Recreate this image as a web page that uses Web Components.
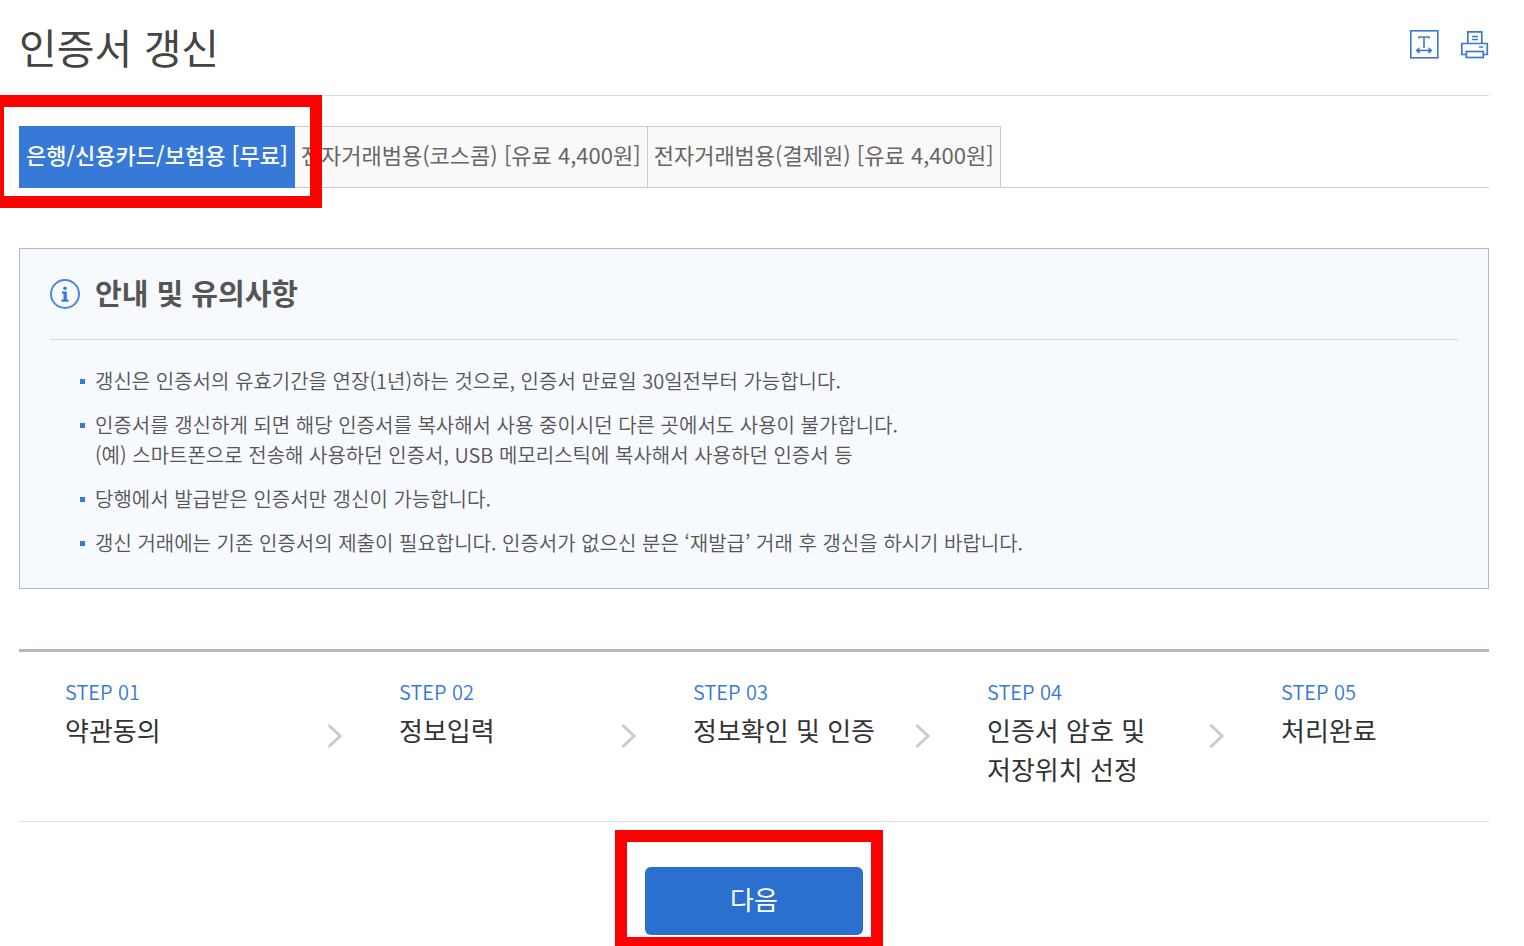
<!DOCTYPE html>
<html lang="ko">
<head>
<meta charset="utf-8">
<meta name="viewport" content="width=device-width, initial-scale=1">
<title>인증서 갱신</title>
<style>
  body {
    margin: 0;
    padding: 0 35px 0 19px;
    background: #fff;
    color: #444;
    font-family: "Noto Sans CJK KR", "Noto Sans", sans-serif;
    --blue: #2b70cf;
    --line: #ddd;
  }
</style>
</head>
<body>

<page-header>인증서 갱신</page-header>

<cert-tabs>
  <cert-tab active marked>은행/신용카드/보험용 [무료]</cert-tab>
  <cert-tab>전자거래범용(코스콤) [유료 4,400원]</cert-tab>
  <cert-tab>전자거래범용(결제원) [유료 4,400원]</cert-tab>
</cert-tabs>

<notice-box>
  <span slot="title">안내 및 유의사항</span>
  <notice-item>갱신은 인증서의 유효기간을 연장(1년)하는 것으로, 인증서 만료일 30일전부터 가능합니다.</notice-item>
  <notice-item>인증서를 갱신하게 되면 해당 인증서를 복사해서 사용 중이시던 다른 곳에서도 사용이 불가합니다.<br>(예) 스마트폰으로 전송해 사용하던 인증서, USB 메모리스틱에 복사해서 사용하던 인증서 등</notice-item>
  <notice-item>당행에서 발급받은 인증서만 갱신이 가능합니다.</notice-item>
  <notice-item>갱신 거래에는 기존 인증서의 제출이 필요합니다. 인증서가 없으신 분은 ‘재발급’ 거래 후 갱신을 하시기 바랍니다.</notice-item>
</notice-box>

<step-list>
  <step-item step="01" first>약관동의</step-item>
  <step-item step="02">정보입력</step-item>
  <step-item step="03">정보확인 및 인증</step-item>
  <step-item step="04">인증서 암호 및 저장위치 선정</step-item>
  <step-item step="05">처리완료</step-item>
</step-list>

<next-button>다음</next-button>

<script>
// 공통: shadow root에 마크업 넣기
class BaseElement extends HTMLElement {
  connectedCallback() {
    if (this.shadowRoot) return;
    this.attachShadow({ mode: 'open' });
    this.shadowRoot.innerHTML = this.render();
  }
}

/**
 * 제목 + 글자크기/인쇄 버튼
 */
class PageHeader extends BaseElement {
  render() {
    return `
      <style>
        :host {
          display: flex;
          justify-content: space-between;
          align-items: flex-start;
          padding: 16px 0 19px;
          border-bottom: 1px solid var(--line);
        }
        h1 {
          margin: 0;
          font-size: 41px;
          font-weight: 400;
          line-height: 60px;
        }
        .tools {
          display: flex;
          gap: 21px;
          padding-top: 14px;
        }
        button {
          display: block;
          padding: 0;
          border: 0;
          background: none;
          cursor: pointer;
        }
        svg {
          display: block;
          width: 29px;
          height: 29px;
          fill: none;
          stroke: #3a79cf;
        }
      </style>
      <h1><slot></slot></h1>
      <div class="tools">
        <button type="button" aria-label="글자 크기">
          <svg viewBox="0 0 29 29" stroke-width="1.6">
            <rect x=".8" y=".8" width="27" height="27"/>
            <path d="M9 8.500V7h10v1.500M14 7v11M7 20.500h14"/>
            <path d="M9.500 17l-4 3.500 4 3.500zM18.500 17l4 3.500-4 3.500z" fill="#3a79cf" stroke="none"/>
          </svg>
        </button>
        <button type="button" aria-label="인쇄">
          <svg viewBox="0 0 29 29" stroke-width="1.7">
            <path d="M7.800 13.500V1.800h14v11.700"/>
            <path d="M6 24.500H1.800v-11h25.500v11H23"/>
            <rect x="6.300" y="21.500" width="17" height="6"/>
            <path d="M12 6.500h6M12 9.500h6M19 17h4"/>
          </svg>
        </button>
      </div>
    `;
  }
}

class CertTabs extends BaseElement {
  render() {
    return `
      <style>
        :host {
          display: block;
          margin-top: 30px;
          border-bottom: 1px solid #ccc;
        }
        nav {
          display: flex;
          margin-bottom: -1px;
        }
      </style>
      <nav><slot></slot></nav>
    `;
  }
}

class CertTab extends BaseElement {
  render() {
    return `
      <style>
        :host {
          display: block;
          position: relative;
          margin-right: -1px;
        }
        a {
          display: block;
          padding: 0 6px 6px;
          border: 1px solid #ccc;
          background: #f9f9f9;
          color: #666;
          font-size: 22px;
          line-height: 54px;
          white-space: nowrap;
          text-decoration: none;
        }
        :host([active]) a {
          background: #3779d6;
          border-color: #3779d6;
          color: #fff;
          font-weight: 500;
        }
        .mark {
          display: none;
        }
        /* 강조 테두리 */
        :host([marked]) {
          z-index: 1;
        }
        :host([marked]) .mark {
          display: block;
          position: absolute;
          inset: -31px -27px -20px -27px;
          border: 12px solid #f00;
          pointer-events: none;
        }
      </style>
      <a href="#"><slot></slot></a>
      <span class="mark"></span>
    `;
  }
}

/**
 * 안내 박스
 */
class NoticeBox extends BaseElement {
  render() {
    return `
      <style>
        :host {
          display: block;
          margin-top: 60px;
          padding: 30px;
          border: 1px solid #b5b9d0;
          background: #f6f9fe;
        }
        h2 {
          display: flex;
          align-items: center;
          gap: 15px;
          margin: 0;
          padding-bottom: 30px;
          border-bottom: 1px solid #d3d8dc;
          color: #555;
          font-size: 29px;
          font-weight: 700;
          line-height: 26px;
        }
        ::slotted([slot="title"]) {
          padding-bottom: 4px;
        }
        svg {
          width: 30px;
          height: 30px;
        }
        .items {
          display: flex;
          flex-direction: column;
          gap: 14px;
          padding: 26px 30px 0;
        }
      </style>
      <h2>
        <svg viewBox="0 0 30 30" aria-hidden="true">
          <circle cx="15" cy="15" r="14" fill="none" stroke="#4a8ad9" stroke-width="2"/>
          <circle cx="15" cy="9.300" r="1.800" fill="#3779d6"/>
          <path d="M12 12.500h4.800v8H18.500v2.200h-7v-2.200h2v-5.800H12z" fill="#3779d6"/>
        </svg>
        <slot name="title"></slot>
      </h2>
      <div class="items" role="list"><slot></slot></div>
    `;
  }
}

class NoticeItem extends BaseElement {
  connectedCallback() {
    super.connectedCallback();
    this.setAttribute('role', 'listitem');
  }

  render() {
    return `
      <style>
        :host {
          display: flex;
          gap: 10px;
          color: #555;
          font-size: 20px;
          font-weight: 350;
          line-height: 30px;
        }
        i {
          flex: none;
          width: 5px;
          height: 5px;
          margin-top: 13px;
          background: #3779d6;
        }
      </style>
      <i></i>
      <div><slot></slot></div>
    `;
  }
}

/**
 * 진행 단계
 */
class StepList extends BaseElement {
  render() {
    return `
      <style>
        :host {
          display: grid;
          grid-template-columns: repeat(5, 1fr);
          margin-top: 60px;
          padding: 25px 0 33px;
          border-top: 3px solid #b4b9c6;
          border-bottom: 1px solid var(--line);
        }
      </style>
      <slot></slot>
    `;
  }
}

class StepItem extends BaseElement {
  render() {
    return `
      <style>
        :host {
          display: flex;
          align-items: flex-start;
          gap: 57px;
          padding-left: 14px;
        }
        :host([first]) {
          padding-left: 46px;
        }
        :host([first]) svg {
          display: none;
        }
        svg {
          flex: none;
          width: 15px;
          height: 24px;
          margin-top: 47px;
          fill: none;
          stroke: #ccc;
          stroke-width: 3;
        }
        .no {
          color: #3779d6;
          font-size: 20px;
          font-weight: 350;
          line-height: 30px;
        }
        .name {
          margin-top: 3px;
          color: #333;
          font-size: 26px;
          line-height: 39px;
          word-break: keep-all;
        }
      </style>
      <svg viewBox="0 0 15 24" aria-hidden="true"><path d="M1.500 1l11.500 11L1.500 23"/></svg>
      <div>
        <div class="no">STEP ${this.getAttribute('step')}</div>
        <div class="name"><slot></slot></div>
      </div>
    `;
  }
}

class NextButton extends BaseElement {
  render() {
    return `
      <style>
        :host {
          display: flex;
          justify-content: center;
          padding: 45px 0 11px;
        }
        .wrap {
          position: relative;
        }
        button {
          display: block;
          width: 218px;
          height: 68px;
          padding: 0 0 6px;
          border: 0;
          border-radius: 6px;
          background: var(--blue);
          color: #fff;
          font-family: inherit;
          font-size: 26px;
          cursor: pointer;
        }
        /* 강조 테두리 */
        .mark {
          position: absolute;
          inset: -37px -20px -11px -30px;
          border: 12px solid #f00;
          border-bottom-width: 9px;
          pointer-events: none;
        }
      </style>
      <div class="wrap">
        <button type="button"><slot></slot></button>
        <span class="mark"></span>
      </div>
    `;
  }
}

customElements.define('page-header', PageHeader);
customElements.define('cert-tabs', CertTabs);
customElements.define('cert-tab', CertTab);
customElements.define('notice-box', NoticeBox);
customElements.define('notice-item', NoticeItem);
customElements.define('step-list', StepList);
customElements.define('step-item', StepItem);
customElements.define('next-button', NextButton);
</script>
</body>
</html>
